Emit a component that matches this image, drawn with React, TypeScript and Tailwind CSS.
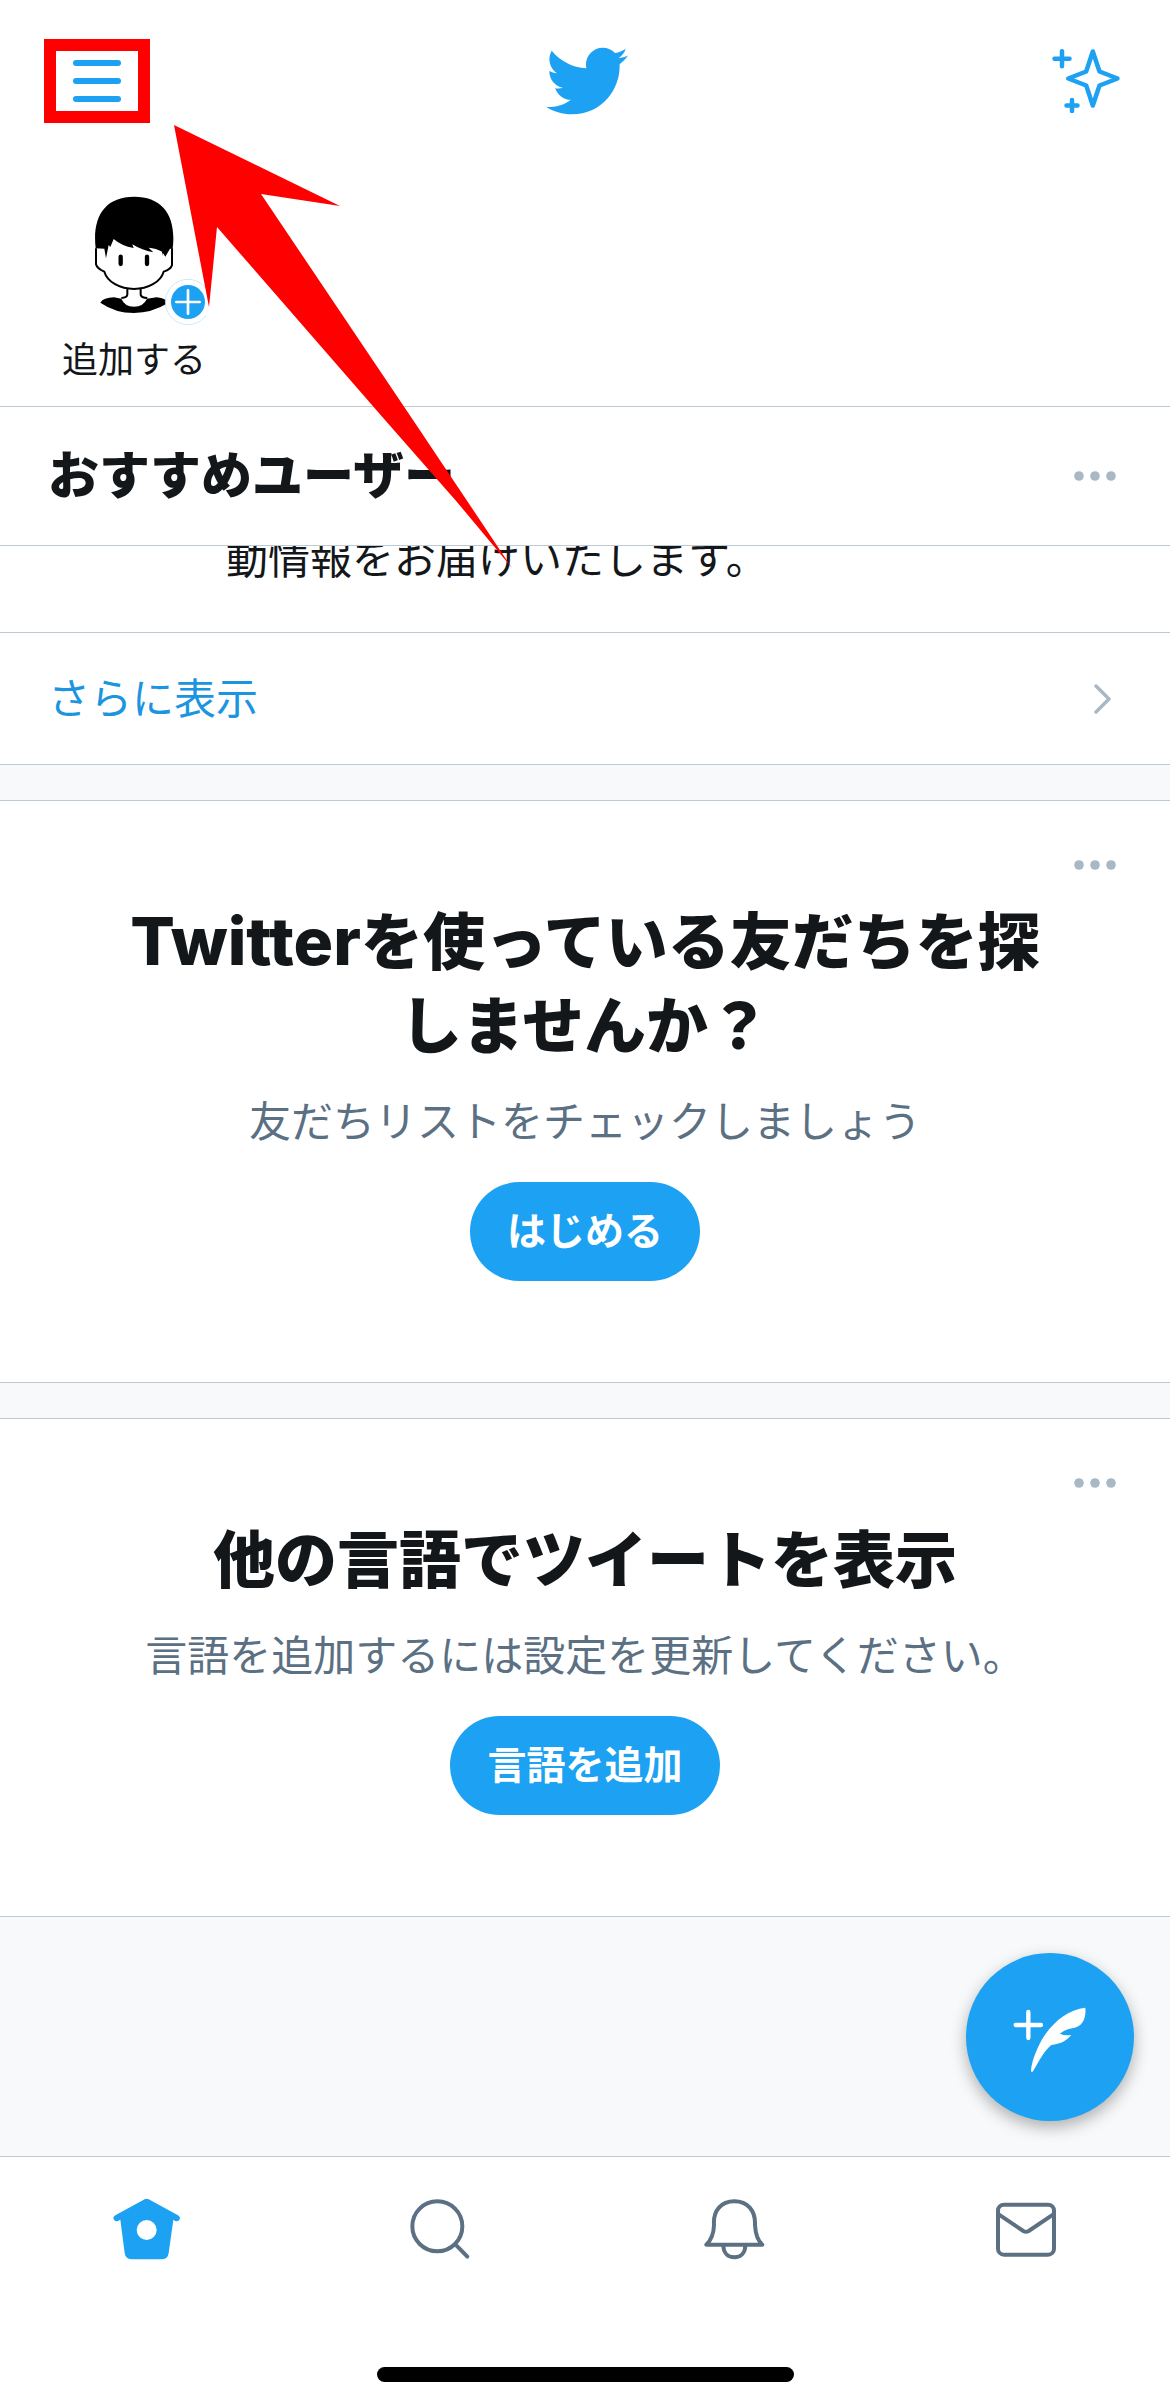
import { useState, type ReactNode } from 'react';
import { FaTwitter } from 'react-icons/fa';

type Tab = 'home' | 'search' | 'notifications' | 'messages';

const MoreButton = ({ label }: { readonly label: string }) => (
	<button aria-label={label} className="block shrink-0 text-[#aab8c5]">
		<svg className="block" width="42" height="10" fill="currentColor">
			<circle cx="5" cy="5" r="4.8" />
			<circle cx="21" cy="5" r="4.8" />
			<circle cx="37" cy="5" r="4.8" />
		</svg>
	</button>
);

const SparkleIcon = () => (
	<svg
		width="80"
		height="72"
		viewBox="0 0 80 72"
		fill="none"
		stroke="currentColor"
		strokeWidth="4.5"
		strokeLinecap="round"
		strokeLinejoin="round"
	>
		<path d="M42.8 6.5 L49.5 26.5 L67.5 33.5 L49.5 40.5 L42.8 60.5 L36.2 40.5 L18.2 33.5 L36.2 26.5 Z" />
		<path d="M12 6.3v15M4.500 13.7h15M22 55v11M16.500 60.500h11" />
	</svg>
);

const AvatarIcon = () => (
	<svg width="144" height="140" viewBox="186 570 432 420" fill="none">
		<path
			d="M288 745V793Q291 806 313 815C322 846 360 867 402 867C444 867 482 846 491 815Q513 808 516 795V745"
			fill="#fff"
			stroke="#000"
			strokeWidth="6"
		/>
		<path
			d="M287 745C276 650 315 590 402 590C490 590 530 650 518 746H510L496 770L488 758L486 768V755Q468 744 446 743L460 757Q424 750 397 733L401 744Q365 738 341 717L331 741L326 735L318 775L313 746Z"
			fill="#000"
		/>
		<path d="M362 770v22M441 770v22" stroke="#000" strokeWidth="13" strokeLinecap="round" />
		<path
			d="M301 908Q310 893 342 892L364 896Q374 920 402 920Q430 920 441 896L470 892Q500 895 503 910Q455 939 402 939Q346 939 301 908Z"
			fill="#000"
		/>
		<path
			d="M382 866V884Q381 893 364 894M422 866V884Q424 893 442 894"
			stroke="#000"
			strokeWidth="6"
		/>
		<circle cx="564" cy="906" r="68" fill="#fff" stroke="#b5dcf8" strokeWidth="2" />
		<circle cx="564" cy="906" r="51" fill="#1da1f2" />
		<path d="M564 871v70M529 906h70" stroke="#fff" strokeWidth="8" strokeLinecap="round" />
	</svg>
);

const ComposeIcon = () => (
	<svg className="block size-full" viewBox="79 69 504 504">
		<path
			d="M266 246v78M228 285h76"
			stroke="#fff"
			strokeWidth="13"
			strokeLinecap="round"
		/>
		<path
			d="M437 233C382 238 332 284 306 330C286 367 275 400 274 423Q276 428 280 424C300 390 314 362 335 345C362 342 380 333 395 315Q375 318 361 311Q375 299 398 295C429 290 440 265 437 233Z"
			fill="#fff"
		/>
	</svg>
);

const HomeIcon = () => (
	<svg width="72" height="72" viewBox="91 162 216 216">
		<path
			d="M195 181Q201 177 207 181L295 229Q303 234 300 241Q296 249 287 246L281 242L267 342Q265 361 245 361H157Q138 361 135 342L122 242L115 246Q106 249 102 241Q99 234 107 229Z"
			fill="currentColor"
		/>
		<circle cx="201" cy="273" r="30" fill="#fff" />
	</svg>
);

const SearchIcon = () => (
	<svg
		width="72"
		height="72"
		viewBox="971 162 216 216"
		fill="none"
		stroke="currentColor"
		strokeWidth="12"
		strokeLinecap="round"
	>
		<circle cx="1074" cy="262" r="75" />
		<path d="M1128 316l36 37" />
	</svg>
);

const BellIcon = () => (
	<svg
		width="72"
		height="72"
		viewBox="107 162 216 216"
		fill="none"
		stroke="currentColor"
		strokeWidth="12"
		strokeLinecap="round"
		strokeLinejoin="round"
	>
		<path d="M141 317H309Q289 299 287 258C289 214 264 187 225 187C186 187 161 214 164 258Q163 296 141 317Z" />
		<path d="M192 319C192 342 206 355 225 355C244 355 258 342 258 319" />
	</svg>
);

const MailIcon = () => (
	<svg
		width="72"
		height="72"
		viewBox="984 162 216 216"
		fill="none"
		stroke="currentColor"
		strokeWidth="12"
	>
		<rect x="1014" y="197" width="168" height="150" rx="18" />
		<path d="M1016 226L1090 276Q1098 281 1106 276L1180 226" />
	</svg>
);

const tabs = [
	{ id: 'home', label: 'ホーム', Icon: HomeIcon },
	{ id: 'search', label: '検索', Icon: SearchIcon },
	{ id: 'notifications', label: '通知', Icon: BellIcon },
	{ id: 'messages', label: 'メッセージ', Icon: MailIcon },
] as const;

const PromptCard = ({
	title,
	description,
	action,
}: {
	readonly title: ReactNode;
	readonly description: string;
	readonly action: string;
}) => (
	<section className="flex flex-col items-center border-b border-[#bdcad4] bg-white pt-[59px] pb-[101px] text-center">
		<div className="self-end pr-[54px]">
			<MoreButton label="その他" />
		</div>
		<h2 className="mt-[31px] px-[120px] text-[62px] leading-[84px] font-extrabold break-all">
			{title}
		</h2>
		<p className="mt-[26px] text-[42px] leading-[54px] text-[#5b7083]">
			{description}
		</p>
		<button className="mt-[33px] h-[99px] rounded-full bg-[#1da1f2] px-[37px] text-[39px] font-bold text-white">
			{action}
		</button>
	</section>
);

const Divider = () => <div className="h-9 border-b border-[#bdcad4]" />;

export default function App() {
	const [activeTab, setActiveTab] = useState<Tab>('home');

	return (
		<div
			lang="ja"
			className="relative flex min-h-screen flex-col bg-[#f7f9fa] font-[Inter,'Noto_Sans_CJK_JP',sans-serif] text-[#14171a]"
		>
			<header className="grid h-[162px] grid-cols-3 items-center bg-white pr-10 pl-11 text-[#1da1f2]">
				<button
					aria-label="メニュー"
					className="flex h-[84px] w-[106px] flex-col items-center justify-center gap-3 border-12 border-[#ff0000]"
				>
					<span className="h-1.5 w-12 rounded-full bg-[#1da1f2]" />
					<span className="h-1.5 w-12 rounded-full bg-[#1da1f2]" />
					<span className="h-1.5 w-12 rounded-full bg-[#1da1f2]" />
				</button>
				<FaTwitter className="justify-self-center" size={82} />
				<button aria-label="最新ツイート" className="justify-self-end">
					<SparkleIcon />
				</button>
			</header>

			<section className="flex border-b border-[#bdcad4] bg-white pt-7 pb-6 pl-[62px]">
				<button className="flex flex-col items-center gap-2 text-[36px] leading-[44px]">
					<AvatarIcon />
					追加する
				</button>
			</section>

			<section className="bg-white">
				<div className="flex h-[139px] items-center justify-between border-b border-[#bdcad4] pr-[54px] pl-12">
					<h2 className="text-[51px] font-extrabold">おすすめユーザー</h2>
					<MoreButton label="その他" />
				</div>
				{/* the row is scrolled half under the heading */}
				<div className="flex h-[87px] flex-col justify-end overflow-hidden border-b border-[#bdcad4] pb-[46px] pl-[226px]">
					<p className="text-[42px] leading-[54px]">動情報をお届けいたします。</p>
				</div>
				<a
					href="#"
					className="flex h-[132px] items-center justify-between border-b border-[#bdcad4] pr-[58px] pl-12 text-[42px] text-[#1b95e0]"
				>
					さらに表示
					<svg
						className="text-[#aab8c5]"
						width="20"
						height="34"
						fill="none"
						stroke="currentColor"
						strokeWidth="3.5"
						strokeLinecap="round"
						strokeLinejoin="round"
					>
						<path d="M4 4L17 17L4 30" />
					</svg>
				</a>
			</section>

			<Divider />
			<PromptCard
				title={
					<>
						<span className="text-[66px] leading-none">Twitter</span>
						を使っている友だちを探しませんか？
					</>
				}
				description="友だちリストをチェックしましょう"
				action="はじめる"
			/>
			<Divider />
			<PromptCard
				title="他の言語でツイートを表示"
				description="言語を追加するには設定を更新してください。"
				action="言語を追加"
			/>

			<div className="flex flex-1 items-end justify-end pt-9 pr-9 pb-[35px]">
				<button
					aria-label="ツイートする"
					className="size-[168px] rounded-full bg-[#1da1f2] shadow-[0_6px_16px_rgba(0,0,0,0.3)]"
				>
					<ComposeIcon />
				</button>
			</div>

			<nav className="flex flex-col items-center border-t border-[#bdcad4] bg-white pt-9 pb-6">
				<div className="grid w-full grid-cols-4 justify-items-center">
					{tabs.map(({ id, label, Icon }) => (
						<button
							key={id}
							aria-label={label}
							className={
								activeTab === id ? 'block text-[#1da1f2]' : 'block text-[#5b7083]'
							}
							onClick={() => {
								setActiveTab(id);
							}}
						>
							<Icon />
						</button>
					))}
				</div>
				<div className="mt-[102px] h-[15px] w-[417px] rounded-full bg-black" />
			</nav>

			{/* arrow pointing at the menu button */}
			<svg
				className="pointer-events-none absolute top-[125px] left-[174px]"
				width="340"
				height="446"
				fill="#ff0000"
			>
				<path d="M0 0L166 81L87 69L239 295L338 443L283 377L211 295L43 102L35 182Z" />
			</svg>
		</div>
	);
}
